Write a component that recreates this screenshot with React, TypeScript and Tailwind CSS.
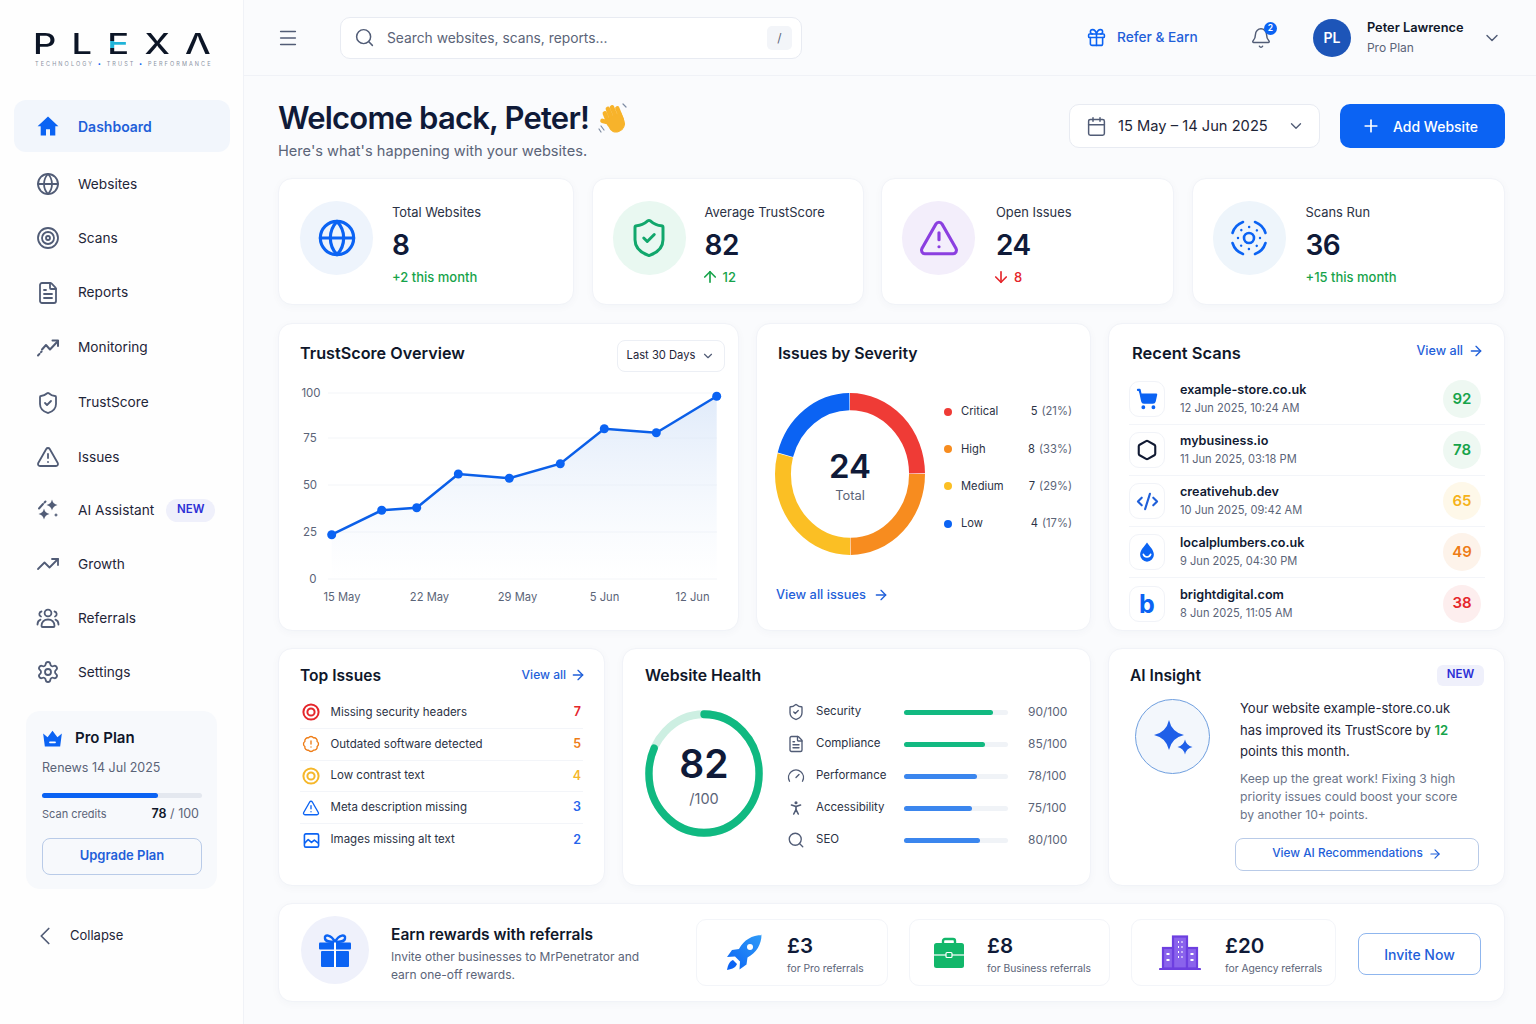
import type { ReactNode } from "react";
import {
  ArrowDown,
  ArrowRight,
  ArrowUp,
  BadgeAlert,
  Bell,
  Calendar,
  ChevronDown,
  ChevronLeft,
  CodeXml,
  FileText,
  Gauge,
  Gift,
  Globe,
  Hexagon,
  Menu,
  PersonStanding,
  Plus,
  Search,
  Settings,
  ShieldCheck,
  ShoppingCart,
  Target,
  TrendingUp,
  TriangleAlert,
} from "lucide-react";

function Star({ cx, cy, r }: { cx: number; cy: number; r: number }) {
  return (
    <path
      d={`M${cx} ${cy - r}Q${cx + r * 0.18} ${cy - r * 0.18} ${cx + r} ${cy}Q${cx + r * 0.18} ${cy + r * 0.18} ${cx} ${cy + r}Q${cx - r * 0.18} ${cy + r * 0.18} ${cx - r} ${cy}Q${cx - r * 0.18} ${cy - r * 0.18} ${cx} ${cy - r}Z`}
      fill="currentColor"
    />
  );
}

function HomeIcon() {
  return (
    <svg viewBox="0 0 24 24" className="w-[24px] h-[24px] text-[#0b63f3]" fill="currentColor">
      <path d="M12 2.5 1.6 12.2h3.1V21.500h5.300v-6.200h4v6.200h5.300v-9.300h3.100z" />
    </svg>
  );
}

function MonitorIcon() {
  return (
    <svg viewBox="0 0 24 24" className="w-[24px] h-[24px]" fill="none" stroke="currentColor" strokeWidth="2" strokeLinecap="round" strokeLinejoin="round">
      <path d="M6 13.500 10 9l4 4.500L22 5" />
      <path d="M16.500 4.500H22V10" />
      <path d="M2 19.500l1.500-1.700M5 16.200l.6-.7" />
    </svg>
  );
}

function SparkleNavIcon() {
  return (
    <svg viewBox="0 0 24 24" className="w-[24px] h-[24px]">
      <Star cx={16} cy={7} r={5.500} />
      <Star cx={8} cy={16} r={5.500} />
      <Star cx={20} cy={17} r={2} />
      <path d="M3 10.500 7 6M8.500 4.500l1-1" stroke="currentColor" strokeWidth="2" strokeLinecap="round" />
    </svg>
  );
}

function PeopleIcon() {
  return (
    <svg viewBox="0 0 24 24" className="w-[24px] h-[24px]" fill="none" stroke="currentColor" strokeWidth="1.800" strokeLinecap="round" strokeLinejoin="round">
      <circle cx="12" cy="7" r="3.400" />
      <path d="M5.500 20c0-4 2.700-6.500 6.500-6.500s6.500 2.500 6.500 6.500c0 .6-.4 1-1 1h-11c-.6 0-1-.4-1-1z" />
      <path d="M5.500 5.500a2.600 2.600 0 0 0-.5 5M18.500 5.500a2.600 2.600 0 0 1 .5 5" />
      <path d="M1.500 18.500c0-2.500 1-4 3-4.800M22.500 18.500c0-2.500-1-4-3-4.800" />
    </svg>
  );
}

function ScanRingIcon() {
  return (
    <svg viewBox="0 0 40 40" className="w-[40px] h-[40px] text-[#0b63f3]" fill="none" stroke="currentColor" strokeLinecap="round">
      <circle cx="20" cy="20" r="5" strokeWidth="2.600" />
      <circle cx="20" cy="20" r="11" strokeWidth="2.400" strokeDasharray="0.1 8.500" />
      <path d="M3.500 15A17 17 0 0 1 14 4M26 4A17 17 0 0 1 36.500 15M36.500 25A17 17 0 0 1 26 36M14 36A17 17 0 0 1 3.500 25" strokeWidth="2.600" />
    </svg>
  );
}

function DropIcon() {
  return (
    <svg viewBox="0 0 24 24" className="w-[22px] h-[22px] text-[#0b63f3]" fill="currentColor">
      <path d="M12 1.500C9 6 4.500 9.500 4.500 15a7.500 7.500 0 0 0 15 0C19.500 9.500 15 6 12 1.500z" />
      <path d="M8 14.500a4.200 4.200 0 0 0 8 0" fill="none" stroke="#fff" strokeWidth="1.800" strokeLinecap="round" />
    </svg>
  );
}

function CrownIcon() {
  return (
    <svg viewBox="0 0 24 20" className="w-[21px] h-[17px] text-[#0b63f3]">
      <path d="M1 4l5.200 4.500L12 1l5.800 7.500L23 4l-2 15.500H3z" fill="currentColor" />
      <rect x="8" y="13.500" width="8" height="2" rx="1" fill="#fff" />
    </svg>
  );
}

function HandIcon() {
  return (
    <svg viewBox="0 0 32 32" className="w-[32px] h-[32px] ml-[9px]" fill="none">
      <g transform="rotate(-22 17 18)" stroke="#f7b32b" strokeLinecap="round">
        <path d="M10 8v12M14.500 5v13M19 5v13M23.500 8v12" strokeWidth="4.400" />
        <path d="M9 17 5 14" strokeWidth="4.400" />
        <path d="M9 14h16v8a8 8 0 0 1-8 8h-1c-4 0-7-3-7-7z" fill="#f7b32b" strokeWidth="1" />
      </g>
      <path d="M3 24l3 4M1 27l2 3M25 2l3 3" stroke="#7d8ba3" strokeWidth="1.200" strokeLinecap="round" />
    </svg>
  );
}

function RingIcon({ className }: { className: string }) {
  return (
    <svg viewBox="0 0 18 18" className={`w-[18px] h-[18px] ${className}`} fill="none" stroke="currentColor">
      <circle cx="9" cy="9" r="7.600" strokeWidth="2" />
      <circle cx="9" cy="9" r="3.600" strokeWidth="2" />
    </svg>
  );
}

function PictureIcon() {
  return (
    <svg viewBox="0 0 18 18" className="w-[17px] h-[17px] text-[#0b63f3]" fill="none" stroke="currentColor" strokeWidth="1.700" strokeLinejoin="round">
      <rect x="1.500" y="2" width="15" height="14" rx="1.500" />
      <path d="M1.500 12l4-4 3.500 3 3-2.500 4.500 3.500" />
    </svg>
  );
}

function RocketIcon() {
  return (
    <svg viewBox="0 0 38 38" className="w-[38px] h-[38px]">
      <defs>
        <linearGradient id="rocket" x1="0" y1="1" x2="1" y2="0">
          <stop offset="0" stopColor="#0b63f3" />
          <stop offset="1" stopColor="#2f9cf8" />
        </linearGradient>
      </defs>
      <path d="M37 1C27 1 19 6 14 15l-7 1-5 7 8-.5 5 5-.5 8 7-5 1-7c9-5 14-13 14-23z" fill="url(#rocket)" />
      <circle cx="25" cy="13" r="3" fill="#fff" />
      <path d="M8 26c-3 1-5 4-6 10 6-1 9-3 10-6z" fill="#0b63f3" />
    </svg>
  );
}

function BriefcaseIcon() {
  return (
    <svg viewBox="0 0 32 32" className="w-[32px] h-[32px]">
      <path d="M10 7V4a2 2 0 0 1 2-2h8a2 2 0 0 1 2 2v3" fill="none" stroke="#12b76a" strokeWidth="2.400" />
      <rect x="1" y="6" width="30" height="25" rx="2.500" fill="#12b76a" />
      <path d="M1 18h30" stroke="#fff" strokeWidth="1.200" />
      <rect x="13" y="15.500" width="6" height="5" rx="1" fill="#12b76a" stroke="#fff" strokeWidth="1.200" />
    </svg>
  );
}

function BuildingsIcon() {
  return (
    <svg viewBox="0 0 42 36" className="w-[42px] h-[36px] text-[#6d3fe0]" fill="none" stroke="currentColor" strokeWidth="2.200">
      <rect x="14" y="1.500" width="14" height="32" fill="#8a63ec" />
      <rect x="4" y="13" width="10" height="20.500" fill="#8a63ec" />
      <rect x="28" y="13" width="10" height="20.500" fill="#8a63ec" />
      <path d="M1 34h40" strokeLinecap="round" />
      <path d="M19 7h1M22.500 7h1M19 12h1M22.500 12h1M19 17h1M22.500 17h1M19 22h1M22.500 22h1M7.500 19h3M7.500 25h3M31.500 19h3M31.500 25h3" stroke="#fff" strokeWidth="2" />
    </svg>
  );
}

function GiftFilled() {
  return (
    <svg viewBox="0 0 34 34" className="w-[34px] h-[34px] text-[#0b63f3]">
      <path d="M17 9C13 1 6 1 7 5.500 7.500 9 12 9 17 9zM17 9c4-8 11-8 10-3.500C26.500 9 22 9 17 9z" fill="none" stroke="currentColor" strokeWidth="2.400" />
      <rect x="1" y="9.500" width="32" height="7" rx="1" fill="currentColor" />
      <rect x="3" y="18" width="28" height="16" rx="1" fill="currentColor" />
      <path d="M17 9.500V34" stroke="#fff" strokeWidth="2" />
    </svg>
  );
}

const NAV: { label: string; icon: ReactNode; h: string; badge?: boolean }[] = [
  { label: "Websites", icon: <Globe size={24} strokeWidth={1.800} />, h: "h-[54px]" },
  { label: "Scans", icon: <Target size={24} strokeWidth={1.800} />, h: "h-[54px]" },
  { label: "Reports", icon: <FileText size={24} strokeWidth={1.800} />, h: "h-[55px]" },
  { label: "Monitoring", icon: <MonitorIcon />, h: "h-[55px]" },
  { label: "TrustScore", icon: <ShieldCheck size={24} strokeWidth={1.800} />, h: "h-[55px]" },
  { label: "Issues", icon: <TriangleAlert size={24} strokeWidth={1.800} />, h: "h-[53px] pt-[1px]" },
  { label: "AI Assistant", icon: <SparkleNavIcon />, h: "h-[54px]", badge: true },
  { label: "Growth", icon: <TrendingUp size={24} strokeWidth={1.800} />, h: "h-[54px]" },
  { label: "Referrals", icon: <PeopleIcon />, h: "h-[54px]" },
  { label: "Settings", icon: <Settings size={24} strokeWidth={1.800} />, h: "h-[54px]" },
];

const STATS = [
  { label: "Total Websites", value: "8", delta: "+2 this month", color: "text-[#16a34a]", bg: "bg-[#eef4fc]", icon: <Globe size={40} strokeWidth={1.900} className="text-[#0b63f3]" />, pad: "pl-[21px]", gap: "gap-[19px]" },
  { label: "Average TrustScore", value: "82", delta: "12", arrow: "up", color: "text-[#16a34a]", bg: "bg-[#e9f8f1]", icon: <ShieldCheck size={42} strokeWidth={1.700} className="text-[#12a76c]" />, pad: "pl-[20px]", gap: "gap-[19px]" },
  { label: "Open Issues", value: "24", delta: "8", arrow: "down", color: "text-[#e5262b]", bg: "bg-[#f3eefb]", icon: <TriangleAlert size={42} strokeWidth={1.800} className="text-[#8b3fe0]" />, pad: "pl-[20px]", gap: "gap-[21px]" },
  { label: "Scans Run", value: "36", delta: "+15 this month", color: "text-[#16a34a]", bg: "bg-[#eef5fb]", icon: <ScanRingIcon />, pad: "pl-[20px]", gap: "gap-[20px]" },
];

const LEGEND = [
  { label: "Critical", value: "5", pct: "(21%)", color: "bg-[#ef3b36]" },
  { label: "High", value: "8", pct: "(33%)", color: "bg-[#f78c1f]" },
  { label: "Medium", value: "7", pct: "(29%)", color: "bg-[#fbbf24]" },
  { label: "Low", value: "4", pct: "(17%)", color: "bg-[#0b63f3]" },
];

const SCANS: { site: string; date: string; score: number; text: string; bg: string; icon: ReactNode }[] = [
  { site: "example-store.co.uk", date: "12 Jun 2025, 10:24 AM", score: 92, text: "text-[#16a34a]", bg: "bg-[#eef8f2]", icon: <ShoppingCart size={22} strokeWidth={2.200} fill="currentColor" className="text-[#0b63f3]" /> },
  { site: "mybusiness.io", date: "11 Jun 2025, 03:18 PM", score: 78, text: "text-[#16a34a]", bg: "bg-[#eef8f2]", icon: <Hexagon size={22} strokeWidth={2.300} className="text-[#111a33]" /> },
  { site: "creativehub.dev", date: "10 Jun 2025, 09:42 AM", score: 65, text: "text-[#f5b21a]", bg: "bg-[#fef8e9]", icon: <CodeXml size={23} strokeWidth={2.200} className="text-[#1f5fd9]" /> },
  { site: "localplumbers.co.uk", date: "9 Jun 2025, 04:30 PM", score: 49, text: "text-[#ee7c16]", bg: "bg-[#fdf3ea]", icon: <DropIcon /> },
  { site: "brightdigital.com", date: "8 Jun 2025, 11:05 AM", score: 38, text: "text-[#e5262b]", bg: "bg-[#fdeeee]", icon: <span className="text-[25px] leading-[26px] font-bold text-[#0b63f3]">b</span> },
];

const ISSUES = [
  { label: "Missing security headers", count: 7, color: "text-[#e5262b]", icon: <RingIcon className="text-[#e5262b]" /> },
  { label: "Outdated software detected", count: 5, color: "text-[#ee7c16]", icon: <BadgeAlert size={18} strokeWidth={1.800} className="text-[#ee7c16]" /> },
  { label: "Low contrast text", count: 4, color: "text-[#f5b72a]", icon: <RingIcon className="text-[#f5b72a]" /> },
  { label: "Meta description missing", count: 3, color: "text-[#2563eb]", icon: <TriangleAlert size={18} strokeWidth={1.800} className="text-[#0b63f3]" /> },
  { label: "Images missing alt text", count: 2, color: "text-[#2563eb]", icon: <PictureIcon /> },
];

const HEALTH = [
  { label: "Security", value: 90, fill: "w-[89px]", color: "bg-[#12b981]", icon: <ShieldCheck size={18} strokeWidth={1.800} /> },
  { label: "Compliance", value: 85, fill: "w-[81px]", color: "bg-[#12b981]", icon: <FileText size={18} strokeWidth={1.800} /> },
  { label: "Performance", value: 78, fill: "w-[73px]", color: "bg-[#3b86ee]", icon: <Gauge size={18} strokeWidth={1.800} /> },
  { label: "Accessibility", value: 75, fill: "w-[68px]", color: "bg-[#3b86ee]", icon: <PersonStanding size={18} strokeWidth={2.200} /> },
  { label: "SEO", value: 80, fill: "w-[76px]", color: "bg-[#3b86ee]", icon: <Search size={18} strokeWidth={1.800} /> },
];

const REWARDS = [
  { amount: "£3", label: "for Pro referrals", icon: <RocketIcon />, box: "w-[192px] pl-[28px] gap-[24px]" },
  { amount: "£8", label: "for Business referrals", icon: <BriefcaseIcon />, box: "w-[201px] pl-[23px] gap-[22px]" },
  { amount: "£20", label: "for Agency referrals", icon: <BuildingsIcon />, box: "w-[205px] pl-[27px] gap-[24px]" },
];

const CARD = "bg-white rounded-[14px] border border-[#f1f3f8] shadow-[0_2px_8px_rgba(30,50,90,0.03)]";

const CHART_POINTS: [number, number][] = [
  [331.7, 533.7], [381.7, 509.3], [416.7, 506.7], [458.3, 473], [509.3, 477.3],
  [560.3, 462.7], [604.3, 427.7], [656.3, 431.7], [716.7, 395.3],
];

function Sidebar() {
  return (
    <aside className="w-[244px] shrink-0 h-[1024px] bg-[#fefefe] border-r border-[#f0f2f7] flex flex-col">
      <div className="h-[100px] pl-[33px] pt-[28px]">
        <div className="h-[32px] text-[29px] leading-[32px] font-medium tracking-[12.200px] text-[#0c1526] whitespace-nowrap origin-left scale-x-[1.25]">
          PL
          <span className="bg-[linear-gradient(180deg,#0c1526_0%,#0c1526_42%,#1fb3d8_42%,#1fb3d8_62%,#0c1526_62%)] bg-clip-text text-transparent">E</span>
          XΛ
        </div>
        <div className="text-[5.500px] leading-[8px] tracking-[2.100px] text-[#8a92a3] whitespace-nowrap pl-[2px]">
          TECHNOLOGY <span className="text-[#0b63f3]">•</span> TRUST <span className="text-[#0b63f3]">•</span> PERFORMANCE
        </div>
      </div>
      <div className="mx-[14px] w-[216px] h-[52px] rounded-[12px] bg-[#f2f6fc] flex items-center pl-[22px] gap-[18px]">
        <HomeIcon />
        <span className="text-[14px] font-semibold text-[#1f5fd9]">Dashboard</span>
      </div>
      <nav className="mt-[5px] flex flex-col">
        {NAV.map((item) => (
          <div key={item.label} className={`${item.h} flex items-center pl-[36px] gap-[18px] text-[#515c76]`}>
            {item.icon}
            <span className="text-[13.700px] text-[#1e2538]">{item.label}</span>
            {item.badge && (
              <span className="ml-[-6px] w-[49px] h-[23px] rounded-full bg-[#eff0fb] text-[11.500px] font-semibold text-[#2b2fd6] flex items-center justify-center">NEW</span>
            )}
          </div>
        ))}
      </nav>
      <div className="mt-[12px] ml-[26px] w-[191px] h-[178px] rounded-[14px] bg-[#f7f9fc] px-[16px] pt-[16px]">
        <div className="flex items-center gap-[12px]">
          <CrownIcon />
          <span className="text-[15px] font-semibold text-[#0f172a]">Pro Plan</span>
        </div>
        <div className="mt-[8px] text-[12.500px] leading-[20px] text-[#5b6478]">Renews 14 Jul 2025</div>
        <div className="mt-[15px] h-[5px] w-[160px] rounded-full bg-[#e4e8ef]">
          <div className="h-full w-[116px] rounded-full bg-[#0b63f3]" />
        </div>
        <div className="mt-[6px] flex justify-between pr-[2px] text-[11px] leading-[20px] text-[#5b6478]">
          <span>Scan credits</span>
          <span className="text-[12.500px]"><b className="font-semibold text-[#0f172a]">78</b> / 100</span>
        </div>
        <button className="mt-[14px] w-[160px] h-[37px] rounded-[8px] border border-[#b9cbe8] text-[13px] font-semibold text-[#1f5fd9]">
          Upgrade Plan
        </button>
      </div>
      <div className="mt-[33px] pl-[30px] flex items-center gap-[10px] h-[28px] text-[#515c76]">
        <ChevronLeft size={30} strokeWidth={1.400} />
        <span className="text-[13px] text-[#1e2538]">Collapse</span>
      </div>
    </aside>
  );
}

function Header() {
  return (
    <header className="h-[76px] border-b border-[#f0f2f7] flex items-center pl-[34px] pr-[34px]">
      <Menu size={22} strokeWidth={1.700} className="text-[#515c76] -ml-[1px]" />
      <div className="ml-[41px] w-[462px] h-[42px] rounded-[10px] bg-white border border-[#e8ebf2] flex items-center pl-[13px] pr-[9px]">
        <Search size={21} strokeWidth={1.700} className="text-[#515c76]" />
        <span className="ml-[12px] pt-[1px] text-[13.800px] text-[#5b6478]">Search websites, scans, reports...</span>
        <span className="ml-auto w-[25px] h-[24px] rounded-[5px] bg-[#f3f5f9] flex items-center justify-center text-[12px] text-[#5b6478]">/</span>
      </div>
      <div className="ml-auto flex items-center">
        <Gift size={21} strokeWidth={1.800} className="text-[#0b63f3]" />
        <span className="ml-[10px] w-[81px] text-[13.700px] whitespace-nowrap font-medium text-[#1f5fd9]">Refer &amp; Earn</span>
        <div className="relative ml-[52px]">
          <Bell size={22} strokeWidth={1.600} className="text-[#515c76]" />
          <span className="absolute -top-[5px] -right-[5px] w-[13px] h-[13px] rounded-full bg-[#0b63f3] text-white text-[8.500px] font-semibold flex items-center justify-center">2</span>
        </div>
        <div className="ml-[41px] w-[38px] h-[38px] rounded-full bg-[#1d55b8] text-white text-[14px] font-semibold flex items-center justify-center">PL</div>
        <div className="ml-[16px] pt-[1px] flex flex-col">
          <span className="text-[12.800px] leading-[20px] font-semibold text-[#0f172a]">Peter Lawrence</span>
          <span className="text-[12px] leading-[20px] text-[#5b6478]">Pro Plan</span>
        </div>
        <ChevronDown size={20} strokeWidth={1.700} className="ml-[18.500px] text-[#515c76]" />
      </div>
    </header>
  );
}

function StatCard({ stat, width }: { stat: (typeof STATS)[number]; width: string }) {
  return (
    <div className={`${CARD} ${width} h-[127px] flex items-center ${stat.pad} ${stat.gap}`}>
      <div className={`w-[73px] h-[74px] mb-[8px] rounded-full ${stat.bg} flex items-center justify-center`}>{stat.icon}</div>
      <div className="flex flex-col pt-[7px]">
        <span className="text-[12.900px] leading-[20px] text-[#2b3245]">{stat.label}</span>
        <span className="mt-[4px] text-[28px] leading-[36px] tracking-[-0.5px] font-semibold text-[#0f1a38]">{stat.value}</span>
        <span className={`mt-[4px] text-[13px] leading-[20px] font-medium flex items-center gap-[4px] ${stat.color}`}>
          {stat.arrow === "up" && <ArrowUp size={18} strokeWidth={2.200} className="-ml-[4px]" />}
          {stat.arrow === "down" && <ArrowDown size={18} strokeWidth={2.200} className="-ml-[4px]" />}
          {stat.delta}
        </span>
      </div>
    </div>
  );
}

function TrustChart() {
  const line = CHART_POINTS.map(([x, y]) => `${x},${y}`).join(" ");
  const area = `${line} 716.7,578 331.7,578`;
  const grid: [string, number, number][] = [["100", 392, 311], ["75", 437, 310], ["50", 484, 310], ["25", 531, 310], ["0", 578, 313]];
  const ticks: [string, number][] = [["15 May", 342], ["22 May", 429.500], ["29 May", 517.500], ["5 Jun", 604.500], ["12 Jun", 692.500]];
  return (
    <svg viewBox="278 380 461 230" className="w-[461px] h-[230px] block -ml-px">
      <defs>
        <linearGradient id="area" x1="0" y1="0" x2="0" y2="1">
          <stop offset="0" stopColor="#d6e4f8" stopOpacity="0.75" />
          <stop offset="1" stopColor="#e6effb" stopOpacity="0" />
        </linearGradient>
      </defs>
      {grid.map(([label, y, x]) => (
        <g key={label}>
          <line x1="328" x2="717" y1={y} y2={y} stroke="#f3f5f8" />
          <text x={x} y={y + 4} textAnchor="middle" fontSize="11.500" fill="#5b6478">{label}</text>
        </g>
      ))}
      <polygon points={area} fill="url(#area)" />
      <polyline points={line} fill="none" stroke="#0b5fe8" strokeWidth="2.500" />
      {CHART_POINTS.map(([x, y]) => (
        <circle key={x} cx={x} cy={y} r="4.500" fill="#0b63f3" />
      ))}
      {ticks.map(([label, x]) => (
        <text key={label} x={x} y={599.500} textAnchor="middle" fontSize="11.200" fill="#5b6478">{label}</text>
      ))}
    </svg>
  );
}

function Donut() {
  const segs: [string, number, number][] = [
    ["#ef3b36", 0, 89.500],
    ["#f78c1f", 90, 89.500],
    ["#fbbf24", 180, 105],
    ["#0b63f3", 285.500, 74],
  ];
  return (
    <div className="relative w-[150px] h-[162px] -ml-[1px]">
      <svg viewBox="0 0 160 160" preserveAspectRatio="none" className="w-[150px] h-[162px]">
        <g transform="rotate(-90 80 80)">
          {segs.map(([color, start, len]) => (
            <circle key={color} cx="80" cy="80" r="71.500" fill="none" stroke={color} strokeWidth="17" pathLength={360} strokeDasharray={`${len} ${360 - len}`} strokeDashoffset={-start} />
          ))}
        </g>
      </svg>
      <div className="absolute inset-0 flex flex-col items-center justify-center">
        <span className="mt-[2px] text-[33px] leading-[40px] font-semibold text-[#0f1a38]">24</span>
        <span className="mt-[1px] text-[12.800px] leading-[18px] text-[#5b6478]">Total</span>
      </div>
    </div>
  );
}

function HealthRing() {
  return (
    <div className="relative w-[118px] h-[127px] shrink-0">
      <svg viewBox="0 0 120 120" preserveAspectRatio="none" className="w-[118px] h-[127px]">
        <g transform="rotate(-90 60 60)">
          <circle cx="60" cy="60" r="56" fill="none" stroke="#cdefe2" strokeWidth="7.500" />
          <circle cx="60" cy="60" r="56" fill="none" stroke="#10b981" strokeWidth="7.500" strokeLinecap="round" pathLength={100} strokeDasharray="82 18" />
        </g>
      </svg>
      <div className="absolute inset-0 flex flex-col items-center justify-center">
        <span className="mt-[3px] text-[39px] leading-[46px] font-semibold text-[#0f1a38]">82</span>
        <span className="mt-[2px] text-[14.500px] leading-[20px] text-[#5b6478]">/100</span>
      </div>
    </div>
  );
}

function ViewAll({ label = "View all", className = "" }: { label?: string; className?: string }) {
  return (
    <span className={`flex items-center font-medium text-[#1f5fd9] ${className}`}>
      {label}
      <ArrowRight size={16} strokeWidth={2} />
    </span>
  );
}

export default function App() {
  return (
    <div className="w-[1536px] h-[1024px] overflow-hidden flex bg-[#fafbfd] font-['Inter',sans-serif]">
      <Sidebar />
      <main className="flex-1 min-w-0">
        <Header />
        <div className="pl-[34px] pr-[31px] pt-[24px]">
          <div className="flex h-[60px] mb-[18px]">
            <div>
              <div className="flex items-center h-[36px]">
                <h1 className="text-[31px] leading-[36px] font-semibold tracking-[-0.8px] text-[#0f1a38]">Welcome back, Peter!</h1>
                <HandIcon />
              </div>
              <p className="mt-[5px] text-[14.600px] leading-[20px] text-[#5b6478]">Here's what's happening with your websites.</p>
            </div>
            <div className="ml-auto mt-[4px] flex gap-[20px]">
              <div className="w-[251px] h-[44px] rounded-[10px] bg-white border border-[#e8ebf2] flex items-center pl-[16px] text-[#515c76]">
                <Calendar size={21} strokeWidth={1.700} />
                <span className="ml-[11px] w-[151px] whitespace-nowrap text-[14.700px] text-[#1e2538]">15 May – 14 Jun 2025</span>
                <ChevronDown size={18} strokeWidth={1.800} className="ml-[18px]" />
              </div>
              <button className="w-[165px] h-[44px] rounded-[10px] bg-[#0b63f3] text-white flex items-center pl-[21px] gap-[12px]">
                <Plus size={20} strokeWidth={2} />
                <span className="text-[14px] font-medium">Add Website</span>
              </button>
            </div>
          </div>

          {/* stat row */}
          <div className="flex gap-[17.500px]">
            <StatCard stat={STATS[0]} width="w-[296px]" />
            <StatCard stat={STATS[1]} width="w-[272px]" />
            <StatCard stat={STATS[2]} width="w-[293px]" />
            <StatCard stat={STATS[3]} width="w-[313px]" />
          </div>

          {/* charts row */}
          <div className="mt-[18px] flex gap-[17px] h-[308px]">
            <section className={`${CARD} w-[461px]`}>
              <div className="h-[57px] flex items-center justify-between pl-[21px] pr-[13px]">
                <h2 className="pt-[2px] text-[16.200px] font-semibold text-[#0f172a]">TrustScore Overview</h2>
                <div className="mt-[6px] w-[108px] h-[32px] rounded-[8px] border border-[#eceff5] flex items-center justify-center gap-[6px] text-[11.200px] text-[#1e2538]">
                  Last 30 Days <ChevronDown size={14} strokeWidth={2} className="text-[#515c76]" />
                </div>
              </div>
              <TrustChart />
            </section>
            <section className={`${CARD} w-[335px] pl-[19px] relative`}>
              <h2 className="pl-[2px] pt-[2px] h-[57px] flex items-center text-[15.800px] font-semibold text-[#0f172a]">Issues by Severity</h2>
              <div className="mt-[12px] flex">
                <Donut />
                <div className="ml-[19px] w-[128px] flex flex-col">
                  {LEGEND.map((row) => (
                    <div key={row.label} className="h-[37.300px] flex items-center text-[11.200px]">
                      <span className={`w-[8px] h-[8px] rounded-full ${row.color}`} />
                      <span className="ml-[9px] text-[#2b3245]">{row.label}</span>
                      <span className="ml-auto text-[#2b3245]">{row.value}</span>
                      <span className="ml-[4px] text-[#5b6478]">{row.pct}</span>
                    </div>
                  ))}
                </div>
              </div>
              <ViewAll label="View all issues" className="mt-[30px] gap-[7px] text-[12.800px]" />
            </section>
            <section className={`${CARD} w-[397px]`}>
              <div className="h-[57px] flex items-center justify-between pl-[23px] pr-[20px]">
                <h2 className="pt-[2px] text-[16.500px] font-semibold text-[#0f172a]">Recent Scans</h2>
                <ViewAll className="-mt-[2px] gap-[5px] text-[12.600px]" />
              </div>
              <div className="-mt-[7px] pl-[20px] pr-[19px] flex flex-col">
                {SCANS.map((row, i) => (
                  <div key={row.site} className={`h-[51px] flex items-center ${i < 4 ? "border-b border-[#f3f5f9]" : ""}`}>
                    <div className="w-[36px] h-[36px] rounded-[10px] bg-white border border-[#f1f3f8] flex items-center justify-center">
                      {row.icon}
                    </div>
                    <div className="ml-[15px] flex flex-col">
                      <span className="text-[12.600px] leading-[19px] font-semibold text-[#111a33]">{row.site}</span>
                      <span className="text-[11.100px] leading-[19px] text-[#5b6478]">{row.date}</span>
                    </div>
                    <span className={`ml-auto mr-[4px] w-[38px] h-[38px] rounded-full ${row.bg} ${row.text} text-[15px] font-semibold flex items-center justify-center`}>{row.score}</span>
                  </div>
                ))}
              </div>
            </section>
          </div>

          {/* lower row */}
          <div className="mt-[17px] flex gap-[17px] h-[238px]">
            <section className={`${CARD} w-[327px] px-[21px]`}>
              <div className="h-[54px] flex items-center justify-between">
                <h2 className="text-[15.600px] font-semibold text-[#0f172a]">Top Issues</h2>
                <ViewAll className="-mt-[2px] -mr-[3px] gap-[4px] text-[12px]" />
              </div>
              <div className="-mt-[6px] flex flex-col">
                {ISSUES.map((row, i) => (
                  <div key={row.label} className={`h-[31.800px] flex items-center ${i < 4 ? "border-b border-[#f3f5f9]" : ""}`}>
                    <span className="ml-[2px] w-[18px] flex justify-center">{row.icon}</span>
                    <span className="ml-[10.500px] text-[11.500px] text-[#2b3245]">{row.label}</span>
                    <span className={`ml-auto mr-[2px] text-[12.500px] font-semibold ${row.color}`}>{row.count}</span>
                  </div>
                ))}
              </div>
            </section>
            <section className={`${CARD} w-[469px] pl-[22px]`}>
              <h2 className="h-[54px] flex items-center text-[15.800px] font-semibold text-[#0f172a]">Website Health</h2>
              <div className="flex">
                <div className="mt-[7px]"><HealthRing /></div>
                <div className="ml-[24px] -mt-[7px] flex flex-col">
                  {HEALTH.map((row) => (
                    <div key={row.label} className="h-[32px] flex items-center">
                      <span className="text-[#515c76]">{row.icon}</span>
                      <span className="ml-[11px] w-[88px] text-[11.500px] text-[#2b3245]">{row.label}</span>
                      <div className="w-[104px] h-[5px] rounded-full bg-[#f0f3f7]">
                        <div className={`h-full rounded-full ${row.fill} ${row.color}`} />
                      </div>
                      <span className="ml-[20px] text-[12px] text-[#5b6478]">{row.value}/100</span>
                    </div>
                  ))}
                </div>
              </div>
            </section>
            <section className={`${CARD} w-[397px] relative`}>
              <div className="h-[55px] flex items-center justify-between pl-[21px] pr-[20px]">
                <h2 className="-mt-[2px] text-[15.600px] font-semibold text-[#0f172a]">AI Insight</h2>
                <span className="w-[47px] h-[21px] rounded-[6px] bg-[#eff0fb] text-[11.500px] font-semibold text-[#2b2fd6] flex items-center justify-center -mt-[3px]">NEW</span>
              </div>
              <div className="flex pl-[26px]">
                <div className="-mt-[5px] w-[75px] h-[75px] rounded-full border border-[#6f9fdf] bg-[#f3f7fc] text-[#1f5fe8] flex items-center justify-center shrink-0">
                  <svg viewBox="0 0 60 60" className="w-[60px] h-[60px]">
                    <Star cx={26} cy={28} r={15} />
                    <Star cx={42} cy={40} r={7.500} />
                  </svg>
                </div>
                <div className="ml-[30px] -mt-[6px]">
                  <p className="text-[13.050px] leading-[21.500px] text-[#1e2538]">
                    Your website example-store.co.uk<br />has improved its TrustScore by <b className="font-semibold text-[#16a34a]">12</b><br />points this month.
                  </p>
                  <p className="mt-[7px] text-[12.200px] leading-[18px] text-[#6b7488]">
                    Keep up the great work! Fixing 3 high<br />priority issues could boost your score<br />by another 10+ points.
                  </p>
                  <div className="-ml-[5px] mt-[14px] w-[244px] h-[33px] rounded-[8px] border border-[#b9cbe8] flex items-center justify-center gap-[5px] text-[11.800px] font-medium text-[#1f5fd9]">
                    View AI Recommendations <ArrowRight size={14} strokeWidth={2} />
                  </div>
                </div>
              </div>
            </section>
          </div>

          {/* referrals */}
          <section className={`${CARD} mt-[17px] h-[99px] flex items-center pl-[22px]`}>
            <div className="w-[68px] h-[68px] mb-[5px] rounded-full bg-[#eff1fb] flex items-center justify-center shrink-0"><GiftFilled /></div>
            <div className="ml-[22px] w-[283px] pt-[3px]">
              <h3 className="text-[15.500px] leading-[22px] font-semibold text-[#0f172a]">Earn rewards with referrals</h3>
              <p className="mt-[2px] text-[12px] leading-[18px] text-[#5b6478]">Invite other businesses to MrPenetrator and<br />earn one-off rewards.</p>
            </div>
            <div className="ml-[22px] flex gap-[21px]">
              {REWARDS.map((r) => (
                <div key={r.amount} className={`${r.box} h-[67px] rounded-[10px] bg-white border border-[#f3f5f9] flex items-center`}>
                  {r.icon}
                  <div className="flex flex-col pt-[3px]">
                    <span className="text-[20.500px] leading-[28px] font-semibold text-[#0f1a38]">{r.amount}</span>
                    <span className="text-[10.300px] leading-[16px] text-[#5b6478]">{r.label}</span>
                  </div>
                </div>
              ))}
            </div>
            <button className="ml-[22px] mt-[3px] w-[123px] h-[42px] rounded-[8px] border border-[#8fb6ee] text-[14px] font-medium text-[#1f5fd9]">Invite Now</button>
          </section>
        </div>
      </main>
    </div>
  );
}
